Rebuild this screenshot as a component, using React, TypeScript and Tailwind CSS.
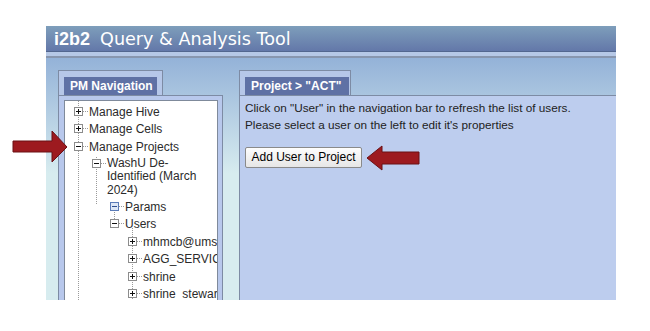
import React from 'react';

type Node = {
  label: string[];
  level: number;
  icon: 'plus' | 'minus' | 'minusLine' | 'blue';
};

const nodes: Node[] = [
  { label: ['Manage Hive'], level: 0, icon: 'plus' },
  { label: ['Manage Cells'], level: 0, icon: 'plus' },
  { label: ['Manage Projects'], level: 0, icon: 'minus' },
  { label: ['WashU De-', 'Identified (March', '2024)'], level: 1, icon: 'minusLine' },
  { label: ['Params'], level: 2, icon: 'blue' },
  { label: ['Users'], level: 2, icon: 'minus' },
  { label: ['mhmcb@umsystem.edu'], level: 3, icon: 'plus' },
  { label: ['AGG_SERVICE_ACCOUNT'], level: 3, icon: 'plus' },
  { label: ['shrine'], level: 3, icon: 'plus' },
  { label: ['shrine_steward'], level: 3, icon: 'plus' },
];

const indent = ['ml-0', 'ml-[18px]', 'ml-[36px]', 'ml-[54px]'];

const ToggleIcon: React.FC<{ kind: Node['icon'] }> = ({ kind }) => {
  const blue = kind === 'blue';
  return (
    <svg width="15" height="14" viewBox="0 0 15 14" className="shrink-0">
      {kind === 'minusLine' && (
        <line x1="4.5" y1="0" x2="4.5" y2="2" stroke="#9a9a9a" strokeDasharray="1 1" />
      )}
      <rect
        x="0.5"
        y="2.5"
        width="8"
        height="8"
        fill={blue ? '#dde7f6' : '#ffffff'}
        stroke={blue ? '#5b7cb8' : '#8c8c8c'}
      />
      <line x1="2" y1="6.5" x2="7" y2="6.5" stroke={blue ? '#2f4f8f' : '#111'} />
      {kind === 'plus' && <line x1="4.5" y1="4" x2="4.5" y2="9" stroke="#111" />}
      <line x1="9" y1="6.5" x2="14" y2="6.5" stroke="#9a9a9a" strokeDasharray="1 1" />
    </svg>
  );
};

const Arrow: React.FC<{ dir: 'right' | 'left'; className: string }> = ({ dir, className }) =>
  dir === 'right' ? (
    <svg width="57" height="34" viewBox="0 0 57 34" className={className}>
      <polygon
        points="1,11 40,11 40,1 55,17 40,32 40,22 1,22"
        fill="#9d1a1f"
        stroke="#6a1014"
        strokeWidth="1"
      />
    </svg>
  ) : (
    <svg width="55" height="27" viewBox="0 0 55 27" className={className}>
      <polygon
        points="1,13 16,1 16,7 53,7 53,19 16,19 16,25"
        fill="#9d1a1f"
        stroke="#6a1014"
        strokeWidth="1"
      />
    </svg>
  );

const Tab: React.FC<{ title: string; width: string; mr: string }> = ({ title, width, mr }) => (
  <div className={`${width} h-[25px] border-t border-l border-r border-[#7d8ba4] bg-[#b6c7e8] pt-[6px] pl-[5px] ${mr}`}>
    <div className="h-[18px] bg-[#5f71a5] px-[6px] text-[12px] leading-[18px] font-bold text-white whitespace-nowrap">
      {title}
    </div>
  </div>
);

export default function App() {
  return (
    <div className="relative min-h-screen bg-white font-['Liberation_Sans',Arial,sans-serif]">
      <div className="pt-[26px] pl-[46px]">
        <div className="w-[570px] h-[274px] overflow-hidden flex flex-col">
          {/* title bar */}
          <div className="h-[25px] shrink-0 flex items-center bg-[linear-gradient(to_bottom,#7e9ebb,#6378a9)] pl-[8px] pt-[1px] text-white whitespace-nowrap">
            <span className="font-bold text-[18px]">i2b2</span>
            <span className="ml-[10px] text-[17.6px] font-['DejaVu_Sans',Verdana,sans-serif]">Query &amp; Analysis Tool</span>
          </div>
          <div className="h-px shrink-0 bg-[#53678f]" />
          <div className="h-[4px] shrink-0 bg-[#b6c8e6]" />
          <div className="h-[2px] shrink-0 bg-[#8896ae]" />

          {/* body */}
          <div className="flex-1 flex gap-[16px] pt-[12px] pl-[12px] bg-[linear-gradient(to_bottom,#94b2d8_0px,#d7ecef_115px,#d7ecef_100%)]">
            {/* left panel */}
            <div className="w-[165px] shrink-0 flex flex-col">
              <Tab title="PM Navigation" width="w-[105px]" mr="pr-[5px]" />
              <div className="h-[260px] border border-[#7d8ba4] bg-[#b8c8ec] pt-[4px] pl-[5px] pr-[4px]">
                <div className="relative h-full border border-[#7f8a9b] bg-white overflow-hidden pt-[2px] pl-[9px] text-[12px] text-[#2b2b2b]">
                  <svg className="absolute left-0 top-0" width="152" height="260">
                    <g stroke="#9a9a9a" strokeDasharray="1 1">
                      <line x1="13.5" y1="0" x2="13.5" y2="260" />
                      <line x1="31.5" y1="68" x2="31.5" y2="104" />
                      <line x1="49.5" y1="109" x2="49.5" y2="119" />
                      <line x1="67.5" y1="127" x2="67.5" y2="260" />
                    </g>
                  </svg>
                  {nodes.map((n, i) => (
                    <div
                      key={i}
                      className={`relative flex items-start ${indent[n.level]} ${
                        n.label.length > 1 ? 'py-[1px] leading-[13.5px]' : 'py-[1.75px] leading-[14px]'
                      } whitespace-nowrap`}
                    >
                      <ToggleIcon kind={n.icon} />
                      <div>
                        {n.label.map((l, j) => (
                          <div key={j}>{l}</div>
                        ))}
                      </div>
                    </div>
                  ))}
                </div>
              </div>
            </div>

            {/* right panel */}
            <div className="w-[420px] shrink-0 flex flex-col">
              <Tab title={'Project > "ACT"'} width="w-[112px]" mr="pr-[1px]" />
              <div className="h-[260px] border border-[#7d8ba4] bg-[#bdcdee] pl-[5px] pt-[2.5px] text-[11.75px] leading-[17px] text-[#222]">
                <p>Click on "User" in the navigation bar to refresh the list of users.</p>
                <p>Please select a user on the left to edit it's properties</p>
                <button className="mt-[14.5px] h-[21px] w-[117px] rounded-[2px] border border-[#8a8a8a] bg-[linear-gradient(to_bottom,#fdfdfd,#e6e6e6)] text-[12px] leading-[19px] text-black">
                  Add User to Project
                </button>
              </div>
            </div>
          </div>
        </div>
      </div>

      <Arrow dir="right" className="absolute left-[12px] top-[130px]" />
      <Arrow dir="left" className="absolute left-[366px] top-[145px]" />
    </div>
  );
}
